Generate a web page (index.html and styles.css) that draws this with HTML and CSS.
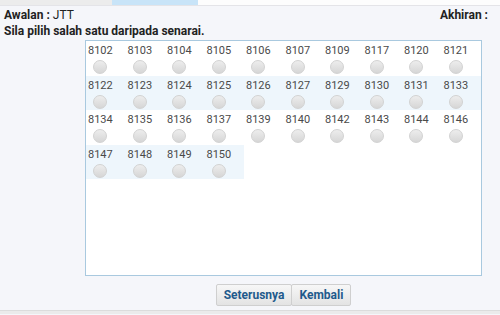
FILE: index.html
```html
<!DOCTYPE html>
<html lang="ms">

<head>
    <meta charset="UTF-8">
    <meta name="viewport" content="width=device-width, initial-scale=1.0">
    <title>Pilih Stesen</title>
    <link rel="stylesheet" href="styles.css">
</head>

<body>
    <div class="tabs">
        <div class="tab tab-first"></div>
        <div class="tab tab-active"></div>
        <div class="tab tab-rest"></div>
    </div>

    <div class="header">
        <div class="header-row">
            <div><b>Awalan :</b> JTT</div>
            <div><b>Akhiran :</b></div>
        </div>
        <div class="hint">Sila pilih salah satu daripada senarai.</div>
    </div>

    <div class="list" id="list"></div>

    <div class="actions">
        <button type="button">Seterusnya</button>
        <button type="button">Kembali</button>
    </div>

    <div class="bottom-bar"></div>

    <script>
        const kod = [
            ['8102', '8103', '8104', '8105', '8106', '8107', '8109', '8117', '8120', '8121'],
            ['8122', '8123', '8124', '8125', '8126', '8127', '8129', '8130', '8131', '8133'],
            ['8134', '8135', '8136', '8137', '8139', '8140', '8142', '8143', '8144', '8146'],
            ['8147', '8148', '8149', '8150']
        ];

        const list = document.getElementById('list');
        kod.forEach(function (baris) {
            const row = document.createElement('div');
            row.className = 'row';
            baris.forEach(function (k) {
                const cell = document.createElement('label');
                cell.className = 'cell';
                cell.innerHTML = '<span class="item"><span class="code">' + k +
                    '</span><input type="radio" name="akhiran" value="' + k + '"><span class="dot"></span></span>';
                row.appendChild(cell);
            });
            list.appendChild(row);
        });
    </script>
</body>

</html>
```

FILE: styles.css
```css
body {
    margin: 0;
    font-family: Roboto, "Liberation Sans", sans-serif;
    background-color: #f5f6fa;
    color: #222;
    height: 315px;
    overflow: hidden;
}

.tabs {
    display: flex;
    height: 5px;
    border-bottom: 1px solid #e4e4e8;
}

.tab-first {
    width: 112px;
    background: #ececec;
}

.tab-active {
    width: 86px;
    background: #c8e4f8;
}

.tab-rest {
    flex: 1;
    background: #fdfdfd;
}

.header {
    padding: 1px 12px 0 4px;
    font-size: 12px;
}

.header-row {
    display: flex;
    justify-content: space-between;
    line-height: 16px;
}

.hint {
    font-weight: bold;
    line-height: 16px;
}

.list {
    margin: 1px 0 0 85px;
    width: 395px;
    height: 234px;
    background: #fff;
    border: 1px solid #a9c9df;
}

.row {
    display: flex;
    width: fit-content;
}

.row:nth-child(even) {
    background: #eef6fc;
}

.cell {
    display: flex;
    align-items: flex-start;
    width: 39.5px;
    height: 34.5px;
    padding: 3px 0 0 2px;
    box-sizing: border-box;
}

.item {
    display: flex;
    flex-direction: column;
    align-items: center;
}

.code {
    font-size: 11px;
    line-height: 14px;
    color: #4a4a4a;
}

.item input {
    display: none;
}

.dot {
    width: 12px;
    height: 12px;
    margin-top: 2px;
    border-radius: 50%;
    border: 1px solid #d2d2d2;
    background: linear-gradient(#ededed, #d6d6d6);
}

.actions {
    display: flex;
    justify-content: center;
    width: 397px;
    margin: 8px 0 0 85px;
}

.actions button {
    height: 22px;
    padding: 0 7px;
    font-family: Roboto, "Liberation Sans", sans-serif;
    font-size: 12px;
    font-weight: bold;
    color: #1f5a8c;
    background: linear-gradient(#f7f7f7, #e3e3e3);
    border: 1px solid #cfcfcf;
    border-radius: 2px;
    cursor: pointer;
}

.actions button + button {
    margin-left: -1px;
}

.bottom-bar {
    margin-top: 4px;
    height: 3px;
    border-top: 1px solid #dcdcdc;
    background: #ebebeb;
}
```
